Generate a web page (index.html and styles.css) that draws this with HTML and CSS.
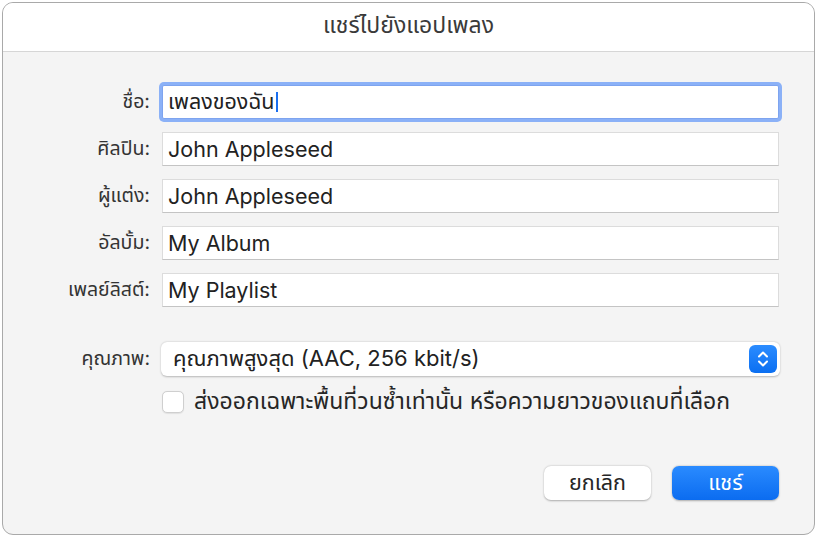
FILE: index.html
```html
<!DOCTYPE html>
<html lang="th">

<head>
    <meta charset="UTF-8">
    <meta name="viewport" content="width=device-width, initial-scale=1.0">
    <title>แชร์ไปยังแอปเพลง</title>
    <link rel="stylesheet" href="styles.css">
</head>

<body>

    <div class="window">
        <div class="titlebar">แชร์ไปยังแอปเพลง</div>

        <div class="content">
            <div class="form-grid">
                <label class="label">ชื่อ:</label>
                <div class="field focused">เพลงของฉัน<span class="caret"></span></div>

                <label class="label">ศิลปิน:</label>
                <div class="field">John Appleseed</div>

                <label class="label">ผู้แต่ง:</label>
                <div class="field">John Appleseed</div>

                <label class="label">อัลบั้ม:</label>
                <div class="field">My Album</div>

                <label class="label">เพลย์ลิสต์:</label>
                <div class="field">My Playlist</div>
            </div>

            <div class="form-grid quality-row">
                <label class="label">คุณภาพ:</label>
                <div class="popup">
                    <span>คุณภาพสูงสุด (AAC, 256 kbit/s)</span>
                    <span class="stepper">
                        <svg width="14" height="20" viewBox="0 0 14 20">
                            <path d="M3 7.5 L7 3.5 L11 7.5 M3 12.5 L7 16.5 L11 12.5" fill="none" stroke="#fff" stroke-width="2" stroke-linecap="round" stroke-linejoin="round" />
                        </svg>
                    </span>
                </div>

                <span></span>
                <div class="check-row">
                    <span class="checkbox"></span>
                    <span>ส่งออกเฉพาะพื้นที่วนซ้ำเท่านั้น หรือความยาวของแถบที่เลือก</span>
                </div>
            </div>

            <div class="buttons">
                <button class="btn">ยกเลิก</button>
                <button class="btn primary">แชร์</button>
            </div>
        </div>
    </div>

</body>

</html>
```

FILE: styles.css
```css
/* Reset */

* {
    box-sizing: border-box;
    margin: 0;
    padding: 0;
}

body {
    font-family: Inter, "Noto Sans Thai", "Noto Sans", sans-serif;
    background: #fff;
    color: #262626;
    padding: 2px;
}

/* Dialog window */

.window {
    width: 813px;
    height: 533px;
    border: 1px solid #a9a9a9;
    border-radius: 11px;
    overflow: hidden;
    background: #f4f4f4;
    display: flex;
    flex-direction: column;
}

.titlebar {
    height: 49px;
    background: #fff;
    border-bottom: 1px solid #d6d6d6;
    display: flex;
    align-items: center;
    justify-content: center;
    font-size: 23px;
    color: #3a3a3a;
    padding-bottom: 3px;
}

.content {
    flex: 1;
    padding: 33px 35px 0 0;
}

/* Label + field grid */

.form-grid {
    display: grid;
    grid-template-columns: 147px 1fr;
    column-gap: 12px;
    row-gap: 13px;
    align-items: center;
}

.label {
    text-align: right;
    font-size: 19.5px;
    color: #333;
}

.field {
    height: 34px;
    background: #fff;
    border: 1px solid #dcdcdc;
    border-bottom-color: #c4c4c4;
    font-size: 21.5px;
    padding-left: 5px;
    color: #222;
    display: flex;
    align-items: center;
}

.field.focused {
    border-color: #7ea4ef;
    box-shadow: 0 0 0 3px #8bb1f7;
    border-radius: 2px;
}

.caret {
    display: inline-block;
    width: 2px;
    height: 20px;
    background: #1a6ff0;
    margin-left: 1px;
}

/* Quality popup */

.quality-row {
    margin-top: 35px;
    row-gap: 9px;
}

.popup {
    height: 34px;
    background: #fff;
    border-radius: 6px;
    box-shadow: 0 0.5px 2px rgba(0, 0, 0, 0.25);
    display: flex;
    align-items: center;
    justify-content: space-between;
    padding: 0 3px 0 12px;
    font-size: 22px;
    color: #222;
    margin-left: -1px;
    margin-right: -1px;
}

.stepper {
    width: 28px;
    height: 28px;
    border-radius: 6px;
    background: linear-gradient(#2b8cff, #0b6ff1);
    display: flex;
    align-items: center;
    justify-content: center;
}

.check-row {
    display: flex;
    align-items: center;
    gap: 10px;
    font-size: 23px;
    color: #262626;
}

.checkbox {
    width: 22px;
    height: 22px;
    border-radius: 5px;
    background: #fff;
    border: 1px solid #cfcfcf;
    box-shadow: 0 0.5px 1px rgba(0, 0, 0, 0.08);
}

/* Buttons */

.buttons {
    display: flex;
    justify-content: flex-end;
    gap: 21px;
    margin-top: 47px;
}

.btn {
    width: 107px;
    height: 34px;
    border: none;
    border-radius: 7px;
    background: #fff;
    box-shadow: 0 0.5px 2px rgba(0, 0, 0, 0.3);
    font-family: inherit;
    font-size: 21.5px;
    color: #262626;
}

.btn.primary {
    background: linear-gradient(#2a8bff, #0b6cf0);
    color: #fff;
}
```
